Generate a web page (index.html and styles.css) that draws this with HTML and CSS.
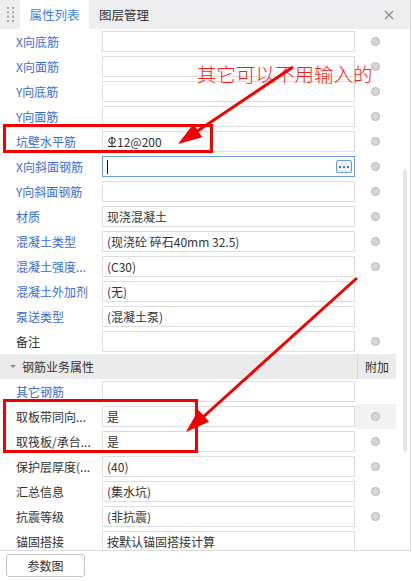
FILE: index.html
```html
<!DOCTYPE html>
<html lang="zh">
<head>
<meta charset="utf-8">
<title>属性列表</title>
<link rel="stylesheet" href="styles.css">
</head>
<body>
<div class="panel">
  <div class="tabbar">
    <div class="grip">
      <svg width="8" height="16" viewBox="0 0 8 16"><g fill="#a8a8a8"><rect x="0" y="0" width="2" height="2"/><rect x="5" y="0" width="2" height="2"/><rect x="0" y="4.3" width="2" height="2"/><rect x="5" y="4.3" width="2" height="2"/><rect x="0" y="8.6" width="2" height="2"/><rect x="5" y="8.6" width="2" height="2"/><rect x="0" y="13" width="2" height="2"/><rect x="5" y="13" width="2" height="2"/></g></svg>
    </div>
    <div class="tab active">属性列表</div>
    <div class="tab second">图层管理</div>
    <div class="close">
      <svg width="10" height="10" viewBox="0 0 10 10"><path d="M1 1L9 9M9 1L1 9" stroke="#8a8a8a" stroke-width="1.2" fill="none"/></svg>
    </div>
  </div>
  <div class="body">
    <div class="list">
      <div class="row"><div class="label blue">X向底筋</div><div class="field"></div><div class="extra"><span class="dot"></span></div></div>
      <div class="row"><div class="label blue">X向面筋</div><div class="field"></div><div class="extra"><span class="dot"></span></div></div>
      <div class="row"><div class="label blue">Y向底筋</div><div class="field"></div><div class="extra"><span class="dot"></span></div></div>
      <div class="row"><div class="label blue">Y向面筋</div><div class="field"></div><div class="extra"><span class="dot"></span></div></div>
      <div class="row"><div class="label blue">坑壁水平筋</div><div class="field"><svg class="rebar" width="10" height="12" viewBox="0 0 10 12"><ellipse cx="5" cy="4.5" rx="3.3" ry="2.8" fill="none" stroke="#222" stroke-width="1"/><path d="M5 0.8V10.5M0.8 10.5H9.2" stroke="#222" stroke-width="1" fill="none"/></svg>12@200</div><div class="extra"><span class="dot"></span></div></div>
      <div class="row"><div class="label blue">X向斜面钢筋</div><div class="field focus"><span class="caret"></span><span class="more"><i></i><i></i><i></i></span></div><div class="extra"><span class="dot"></span></div></div>
      <div class="row"><div class="label blue">Y向斜面钢筋</div><div class="field"></div><div class="extra"><span class="dot"></span></div></div>
      <div class="row"><div class="label blue">材质</div><div class="field">现浇混凝土</div><div class="extra"><span class="dot"></span></div></div>
      <div class="row"><div class="label blue">混凝土类型</div><div class="field">(现浇砼 碎石40mm 32.5)</div><div class="extra"><span class="dot"></span></div></div>
      <div class="row"><div class="label blue">混凝土强度...</div><div class="field">(C30)</div><div class="extra"><span class="dot"></span></div></div>
      <div class="row"><div class="label blue">混凝土外加剂</div><div class="field">(无)</div><div class="extra"></div></div>
      <div class="row"><div class="label blue">泵送类型</div><div class="field">(混凝土泵)</div><div class="extra"></div></div>
      <div class="row"><div class="label">备注</div><div class="field"></div><div class="extra"><span class="dot"></span></div></div>
      <div class="row section"><div class="section-title"><span class="tri"></span>钢筋业务属性</div><div class="extra head">附加</div></div>
      <div class="row"><div class="label blue">其它钢筋</div><div class="field"></div><div class="extra"></div></div>
      <div class="row"><div class="label">取板带同向...</div><div class="field">是</div><div class="extra hover"><span class="dot"></span></div></div>
      <div class="row"><div class="label">取筏板/承台...</div><div class="field">是</div><div class="extra"><span class="dot"></span></div></div>
      <div class="row"><div class="label">保护层厚度(...</div><div class="field">(40)</div><div class="extra"><span class="dot"></span></div></div>
      <div class="row"><div class="label">汇总信息</div><div class="field">(集水坑)</div><div class="extra"><span class="dot"></span></div></div>
      <div class="row"><div class="label">抗震等级</div><div class="field">(非抗震)</div><div class="extra"><span class="dot"></span></div></div>
      <div class="row"><div class="label">锚固搭接</div><div class="field">按默认锚固搭接计算</div><div class="extra"></div></div>
    </div>
    <div class="scroll"><div class="thumb"></div></div>
  </div>
</div>
<div class="footer"><div class="btn">参数图</div></div>

<div class="note">其它可以不用输入的</div>
<svg class="overlay" width="412" height="581" viewBox="0 0 412 581">
  <g stroke="#f20000" stroke-width="3" fill="none">
    <rect x="4.5" y="125.5" width="207" height="26"/>
    <rect x="4.5" y="400.5" width="192" height="51"/>
    <line x1="293" y1="67" x2="196" y2="132"/>
    <line x1="357" y1="278" x2="202" y2="418"/>
  </g>
  <g fill="#f20000">
    <polygon points="178,144 193.5,124.1 202.3,137.3"/>
    <polygon points="186,432 198.4,410 209.2,421.8"/>
  </g>
</svg>
</body>
</html>
```

FILE: styles.css
```css
html, body {
  margin: 0;
  padding: 0;
}
body {
  width: 412px;
  height: 581px;
  overflow: hidden;
  position: relative;
  background: #ffffff;
  font-family: "Noto Sans CJK SC", "Microsoft YaHei", sans-serif;
  font-size: 12px;
  color: #333333;
}
.panel {
  width: 410px;
  border-right: 1px solid #dcdcdc;
}
.tabbar {
  height: 29px;
  display: flex;
  align-items: stretch;
  background: #eeeef0;
}
.grip {
  width: 20px;
  display: flex;
  align-items: center;
  justify-content: center;
  padding-left: 1px;
  box-sizing: border-box;
}
.grip svg { display: block; }
.tab {
  width: 69px;
  display: flex;
  align-items: center;
  justify-content: center;
  font-size: 12.5px;
}
.tab.active {
  background: #ffffff;
  color: #3d7fe0;
}
.tab.second {
  width: auto;
  margin-left: 10px;
  color: #333333;
}
.close {
  margin-left: auto;
  width: 26px;
  display: flex;
  align-items: center;
  justify-content: flex-start;
}
.close svg { display: block; }
.body {
  display: flex;
  height: 521px;
  border-bottom: 1px solid #dcdcdc;
}
.list {
  width: 396px;
  overflow: hidden;
}
.scroll {
  width: 14px;
}
.thumb {
  margin: 140px 0 0 7px;
  width: 4px;
  height: 283px;
  background: #e6e6e6;
  border-radius: 2px;
}
.row {
  display: grid;
  grid-template-columns: 102px 253px 41px;
  height: 25px;
  align-items: center;
}
.label {
  padding-left: 16px;
  white-space: nowrap;
  overflow: hidden;
  color: #333333;
  line-height: 25px;
}
.label.blue {
  color: #3a6cd8;
}
.field {
  height: 21px;
  box-sizing: border-box;
  border: 1px solid #dedede;
  padding-left: 4px;
  display: flex;
  align-items: center;
  white-space: nowrap;
  overflow: hidden;
  color: #333333;
  background: #ffffff;
}
.field.focus {
  border-color: #6b9be0;
}
.rebar {
  display: block;
  margin-right: 0;
}
.caret {
  width: 1px;
  height: 14px;
  background: #111111;
}
.more {
  margin-left: auto;
  margin-right: 2px;
  width: 16px;
  height: 13px;
  box-sizing: border-box;
  border: 1px solid #6b9be0;
  border-radius: 2px;
  background: #eef4fc;
  display: flex;
  align-items: center;
  justify-content: center;
  gap: 2px;
}
.more i {
  display: block;
  width: 2px;
  height: 2px;
  background: #3d7fe0;
}
.extra {
  height: 100%;
  display: flex;
  align-items: center;
  justify-content: center;
}
.extra.hover {
  background: #f2f2f2;
}
.dot {
  display: block;
  width: 9px;
  height: 9px;
  box-sizing: border-box;
  border-radius: 50%;
  background: #d6d6d6;
  border: 1px solid #b8b8b8;
}
.row.section {
  background: #ebebeb;
}
.section-title {
  grid-column: 1 / span 2;
  display: flex;
  align-items: center;
  padding-left: 10px;
  color: #333333;
}
.tri {
  width: 0;
  height: 0;
  border-left: 3px solid transparent;
  border-right: 3px solid transparent;
  border-top: 3px solid #8a8a8a;
  margin-right: 6px;
}
.extra.head {
  border-left: 1px solid #d8d8d8;
  box-sizing: border-box;
  margin-left: 2px;
  color: #333333;
}
.footer {
  height: 30px;
  padding: 3px 0 0 6px;
  box-sizing: border-box;
}
.btn {
  width: 79px;
  height: 23px;
  box-sizing: border-box;
  border: 1px solid #c6c6c6;
  border-radius: 3px;
  background: #ffffff;
  display: flex;
  align-items: center;
  justify-content: center;
  color: #333333;
}
.note {
  position: absolute;
  left: 197px;
  top: 64px;
  font-size: 19.5px;
  line-height: 20px;
  color: #ff1a1a;
  font-weight: 300;
  white-space: nowrap;
}
.overlay {
  position: absolute;
  left: 0;
  top: 0;
  pointer-events: none;
}
```
